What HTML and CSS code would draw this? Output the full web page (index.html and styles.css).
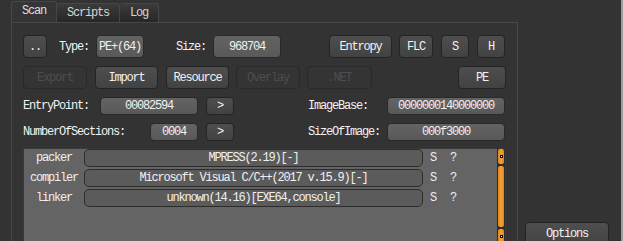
FILE: index.html
```html
<!DOCTYPE html>
<html>
<head>
    <title>Detect It Easy</title>
    <meta name="viewport" content="width=device-width, initial-scale=1.0">
    <link rel="stylesheet" href="styles.css">
</head>
<body>
    <div class="window">
        <div class="main">
            <div class="tabs">
                <div class="tab tab--active">Scan</div>
                <div class="tab tab--scripts">Scripts</div>
                <div class="tab tab--log">Log</div>
            </div>
            <div class="pane">
                <!-- primeira linha: tipo, tamanho e ferramentas -->
                <div class="row row--tall">
                    <button class="btn w-dots">..</button>
                    <span class="label lbl-type">Type:</span>
                    <div class="value w-type">PE+(64)</div>
                    <span class="label lbl-size">Size:</span>
                    <div class="value w-size">968704</div>
                    <button class="btn w-entropy">Entropy</button>
                    <button class="btn w-flc">FLC</button>
                    <button class="btn w-s">S</button>
                    <button class="btn w-h">H</button>
                </div>
                <div class="row row--tall">
                    <button class="btn btn--off w-export">Export</button>
                    <button class="btn w-import">Import</button>
                    <button class="btn w-resource">Resource</button>
                    <button class="btn btn--off w-overlay">Overlay</button>
                    <button class="btn btn--off w-net">.NET</button>
                    <button class="btn w-pe">PE</button>
                </div>
                <!-- cabeçalho PE -->
                <div class="row row--short">
                    <span class="label lbl-entry">EntryPoint:</span>
                    <div class="value w-entry">00082594</div>
                    <button class="btn w-go">&gt;</button>
                    <span class="label lbl-right">ImageBase:</span>
                    <div class="value w-wide">0000000140000000</div>
                </div>
                <div class="row row--short">
                    <span class="label lbl-sections">NumberOfSections:</span>
                    <div class="value w-sections">0004</div>
                    <button class="btn w-go">&gt;</button>
                    <span class="label lbl-right">SizeOfImage:</span>
                    <div class="value w-wide">000f3000</div>
                </div>
                <!-- resultado da detecção -->
                <div class="result">
                    <div class="result__list">
                        <div class="result__row">
                            <span class="result__name">packer</span>
                            <div class="result__field">MPRESS(2.19)[-]</div>
                            <span class="result__act">S</span>
                            <span class="result__act">?</span>
                        </div>
                        <div class="result__row">
                            <span class="result__name">compiler</span>
                            <div class="result__field">Microsoft Visual C/C++(2017 v.15.9)[-]</div>
                            <span class="result__act">S</span>
                            <span class="result__act">?</span>
                        </div>
                        <div class="result__row">
                            <span class="result__name">linker</span>
                            <div class="result__field">unknown(14.16)[EXE64,console]</div>
                            <span class="result__act">S</span>
                            <span class="result__act">?</span>
                        </div>
                    </div>
                    <div class="scroll">
                        <div class="scroll__arrow"><i class="scroll__dot"></i></div>
                        <div class="scroll__handle"></div>
                        <div class="scroll__arrow"><i class="scroll__dot"></i></div>
                    </div>
                </div>
            </div>
        </div>
        <div class="side">
            <button class="btn btn--options">Options</button>
        </div>
    </div>
</body>
</html>
```

FILE: styles.css
```css
html, body {
    margin: 0;
    height: 100%;
    overflow: hidden;
}

body {
    background-color: #333333;
    font-family: "Liberation Mono", "DejaVu Sans Mono", monospace;
    font-size: 12px;
    letter-spacing: -1.2px;
    color: #f0f0f0;
}

.window {
    display: flex;
    height: 100%;
    border-right: 2px solid #9c9c9c;
    box-sizing: border-box;
}

.main {
    width: 518px;
    padding-left: 11px;
    box-sizing: border-box;
}

/* abas */
.tabs {
    display: flex;
    align-items: flex-end;
    height: 22px;
    padding-top: 1px;
    box-sizing: border-box;
}

.tab {
    height: 19px;
    line-height: 19px;
    text-align: center;
    color: #d4d4d4;
    border: 1px solid #474747;
    border-bottom: none;
    border-radius: 3px 3px 0 0;
    background: linear-gradient(#3b3b3b, #272727);
    box-sizing: border-box;
}

.tab--active {
    width: 46px;
    height: 21px;
    line-height: 19px;
    background: #353535;
    color: #dedede;
}

.tab--scripts {
    width: 63px;
    border-left: none;
}

.tab--log {
    width: 39px;
    border-left: none;
}

/* painel principal */
.pane {
    height: 240px;
    border: 1px solid #474747;
    padding: 12px 11px 0 11px;
    box-sizing: border-box;
}

.row {
    display: flex;
    align-items: center;
    margin-bottom: 8px;
}

.row--tall { height: 23px; }
.row--short { height: 18px; }

.btn {
    height: 100%;
    padding: 0;
    font: inherit;
    letter-spacing: inherit;
    color: #f2f2f2;
    background: linear-gradient(#4e4e4e, #424242);
    border: 1px solid #242424;
    border-radius: 4px;
    box-sizing: border-box;
}

.btn--off {
    color: #4e4e4e;
    background: #343434;
    border-color: #292929;
}

.value {
    height: 100%;
    display: flex;
    align-items: center;
    justify-content: center;
    background: linear-gradient(#636363, #595959);
    border: 1px solid #2a2a2a;
    border-radius: 4px;
    box-sizing: border-box;
}

.label {
    color: #f2f2f2;
}

/* larguras da primeira linha */
.w-dots { width: 24px; }
.lbl-type { margin-left: 12px; width: 37px; }
.w-type { width: 48px; }
.lbl-size { margin-left: 32px; width: 37px; }
.w-size { width: 68px; }
.w-entropy { margin-left: 48px; width: 63px; }
.w-flc { margin-left: 7px; width: 34px; }
.w-s { margin-left: 8px; width: 28px; }
.w-h { margin-left: 8px; width: 28px; }

/* segunda linha */
.w-export { width: 64px; }
.w-import { margin-left: 8px; width: 63px; }
.w-resource { margin-left: 8px; width: 63px; }
.w-overlay { margin-left: 7px; width: 64px; }
.w-net { margin-left: 7px; width: 65px; }
.w-pe { margin-left: auto; width: 48px; }

/* linhas do cabeçalho */
.lbl-entry { width: 77px; }
.w-entry { width: 98px; }
.lbl-sections { width: 127px; }
.w-sections { width: 48px; }
.w-go { margin-left: 8px; width: 28px; }
.lbl-right { margin-left: 74px; width: 79px; }
.w-wide { width: 118px; }

/* lista de resultados */
.result {
    display: flex;
    width: 483px;
    height: 100px;
    margin-top: -1px;
    background: #646464;
    border: 1px solid #3a3a3a;
    box-sizing: border-box;
}

.result__list {
    flex: 1;
}

.result__row {
    display: flex;
    align-items: center;
    height: 18px;
    margin-bottom: 2px;
}

.result__name {
    width: 60px;
    text-align: center;
}

.result__field {
    width: 339px;
    height: 18px;
    line-height: 16px;
    text-align: center;
    background: #5b5b5b;
    border: 1px solid #2c2c2c;
    border-radius: 5px;
    box-sizing: border-box;
}

.result__act {
    width: 20px;
    text-align: center;
}

.scroll {
    width: 8px;
    padding: 0 1px;
    background: #2d2d2d;
    box-sizing: border-box;
}

.scroll__arrow {
    height: 15px;
    display: flex;
    align-items: center;
    justify-content: center;
    background: linear-gradient(90deg, #e08418, #f6a13a 50%, #e08418);
    border-radius: 2px;
}

.scroll__handle {
    height: 61px;
    margin: 2px 0;
    background: linear-gradient(90deg, #e08418, #f6a13a 50%, #e08418);
    border-radius: 2px;
}

.scroll__dot {
    width: 1px;
    height: 1px;
    background: #ffffff;
    border: 1px solid #000000;
}

/* coluna lateral */
.side {
    flex: 1;
    display: flex;
    align-items: flex-start;
    padding: 222px 0 0 7px;
}

.btn--options {
    width: 84px;
    height: 26px;
    padding-bottom: 2px;
}
```
